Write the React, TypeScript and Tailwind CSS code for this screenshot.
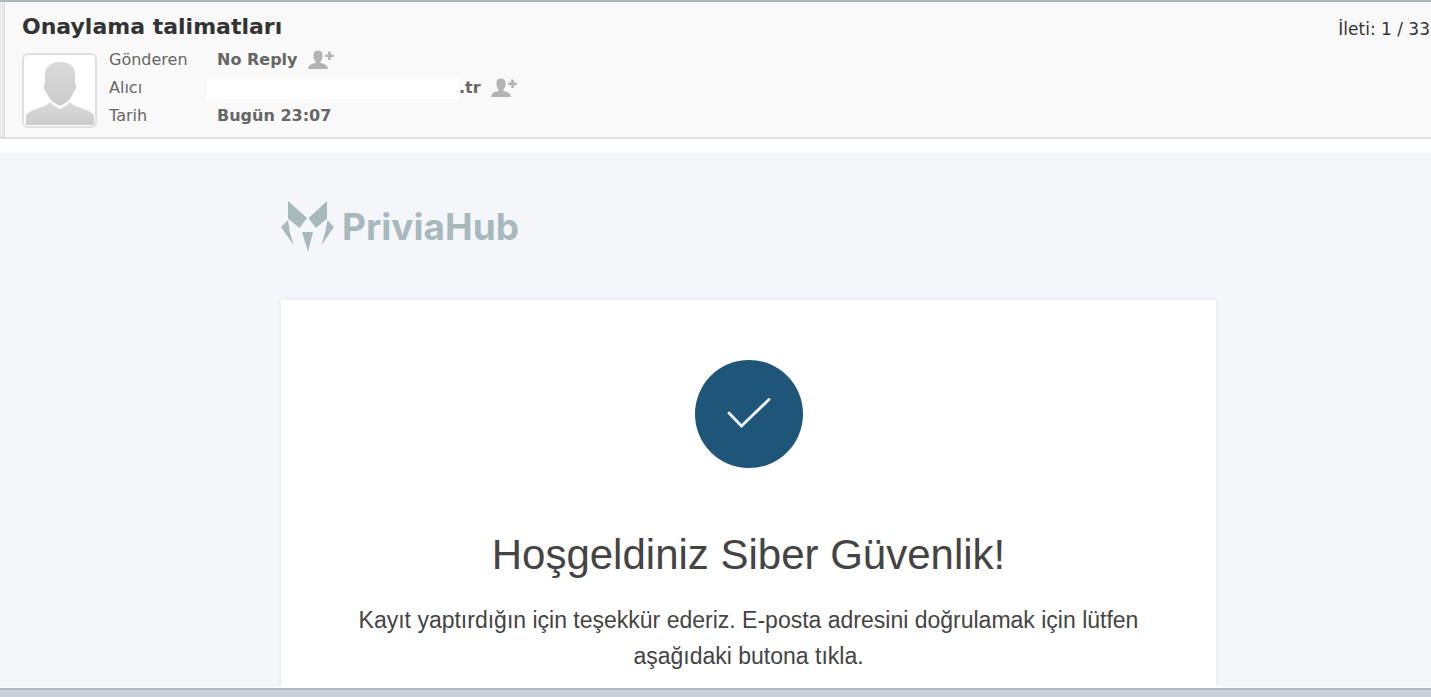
const AddContactIcon = () => (
  <svg viewBox="0 0 26 20" className="h-5 w-[26px]" fill="#b3b3b3" aria-hidden="true">
    <path d="M10 0.500c3 0 4.600 1.800 4.600 5 0 2.300-0.800 4.600-2.100 6v1.500c3 0.600 7 1.500 7.500 6H0c0.500-4.500 4.500-5.400 7.500-6v-1.500c-1.300-1.400-2.100-3.700-2.100-6 0-3.200 1.600-5 4.600-5z" />
    <path d="M20.200 1.500h2.600v3h3v2.600h-3v3h-2.600v-3h-3V4.500h3z" />
  </svg>
);

const Avatar = () => (
  <div className="h-[75px] w-[75px] shrink-0 rounded-md border-2 border-[#e0e0e0] bg-white">
    <svg viewBox="0 0 71 71" className="h-full w-full" role="img" aria-label="Gönderen">
      <defs>
        <linearGradient id="avatarFill" x1="0" y1="0" x2="0" y2="1">
          <stop offset="0" stopColor="#dadada" />
          <stop offset="1" stopColor="#cbcbcb" />
        </linearGradient>
      </defs>
      <g fill="url(#avatarFill)">
        <path d="M36 7c9 0 15 4 15 12v9c2 1 1 8-1.500 9-1 4-3 6-4.500 8-2 2-6 5-9 5.500-3-.5-7-3.500-9-5.500-1.500-2-3.500-4-4.500-8-2.500-1-3.500-8-1.500-9v-9c0-6 5-12 15-12z" />
        <path d="M26 47c2 3 6 4.500 10 7 4-2.500 8-4 10-7 3 4 9 5 14 7 5 1.500 8 4 10 6v10H2V60c2-2 5-4.500 10-6 5-2 11-3 14-7z" />
      </g>
    </svg>
  </div>
);

const Logo = () => (
  <div className="flex items-center gap-2 text-[#a8b9be]">
    <svg viewBox="0 0 53 51" className="h-[51px] w-[53px]" fill="currentColor" aria-hidden="true">
      <path d="M7 0L26 17L18.500 27L7 17.500z" />
      <path d="M46 0L27.500 17L35 27L46 17.500z" />
      <path d="M7 19L0 26L12.500 44L8.500 30z" />
      <path d="M46.500 19L53 26L40.500 44L44.500 30z" />
      <path d="M21 31H32L27 51z" />
    </svg>
    <span className="font-['Inter'] text-[37px] leading-[51px] font-bold">PriviaHub</span>
  </div>
);

export default function App() {
  return (
    <div className="flex h-screen flex-col overflow-hidden bg-white font-['DejaVu_Sans',sans-serif]">
      {/* Message header */}
      <header className="flex shrink-0 justify-between border-t-2 border-b-2 border-t-[#b0b5be] border-b-[#dedede] bg-[#f9f9f9]">
        <div className="w-[5px] shrink-0 border-r border-[#d8d8d8] bg-[#ebebeb]" />
        <div className="flex-1 pt-[9px] pb-[7px] pl-[17px]">
          <h1 className="text-[22px] leading-8 font-bold text-[#333]">Onaylama talimatları</h1>
          <div className="flex gap-3 pt-[10px]">
            <Avatar />
            <dl className="-mt-2 grid grid-cols-[98px_1fr] pt-px text-base leading-7 text-[#666]">
              <dt>Gönderen</dt>
              <dd className="flex items-center gap-[10px] pl-[10px] font-bold">
                No Reply
                <button type="button" aria-label="Göndereni kişilere ekle">
                  <AddContactIcon />
                </button>
              </dd>
              <dt>Alıcı</dt>
              <dd className="flex items-center font-bold">
                <span className="h-[21px] w-[252px] bg-white" />
                .tr
                <button type="button" aria-label="Alıcıyı kişilere ekle" className="ml-[10px]">
                  <AddContactIcon />
                </button>
              </dd>
              <dt>Tarih</dt>
              <dd className="pl-[10px] font-bold">Bugün 23:07</dd>
            </dl>
          </div>
        </div>
        <p className="pt-[11px] pr-px text-[17px] leading-8 text-[#333]">İleti: 1 / 33</p>
      </header>

      {/* Message body */}
      <main className="mt-[14px] flex min-h-0 flex-1 flex-col overflow-hidden bg-[#f4f6fa] pr-[215px] pl-[281px]">
        <div className="shrink-0 py-12">
          <Logo />
        </div>
        <section className="flex flex-1 shrink-0 flex-col items-center bg-white px-16 pt-[60px] text-center font-['Liberation_Sans',sans-serif] text-[#444] shadow-[0_0_6px_rgba(0,0,0,0.07)]">
          <div className="flex size-[108px] items-center justify-center rounded-full bg-[#1f5578]">
            <svg viewBox="0 0 44 32" className="h-8 w-11" fill="none" stroke="#f0f8ff" strokeWidth="2.800" strokeLinecap="round" aria-hidden="true">
              <path d="M2 15L14.500 28L42 1.500" />
            </svg>
          </div>
          <h2 className="mt-[60px] text-[42px] leading-[54px]">Hoşgeldiniz Siber Güvenlik!</h2>
          <p className="mt-5 text-[23px] leading-9">
            Kayıt yaptırdığın için teşekkür ederiz. E-posta adresini doğrulamak için lütfen
            <br />
            aşağıdaki butona tıkla.
          </p>
        </section>
      </main>

      <footer className="mt-px h-[9px] shrink-0 border-t-2 border-[#b0b8c0] bg-[#c8d0d9]" />
    </div>
  );
}
